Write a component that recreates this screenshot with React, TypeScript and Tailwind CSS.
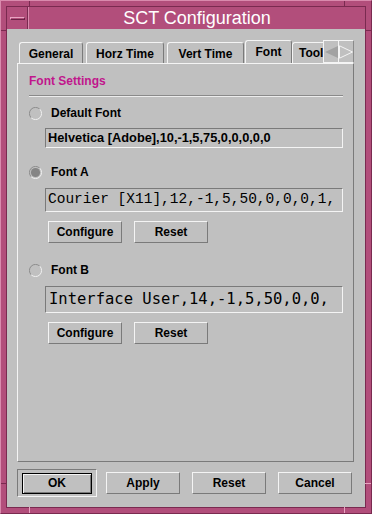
import React from 'react'

const sans = { fontFamily: '"Liberation Sans", Arial, sans-serif' }

// raised motif-ish button
function Btn({ label, className = '' }: { label: string; className?: string }) {
  return (
    <div
      className={`flex h-[22px] w-[74px] items-center justify-center border border-t-[#f4f4f4] border-l-[#f4f4f4] border-r-[#7a7a7a] border-b-[#7a7a7a] text-[12px] font-bold text-black ${className}`}
    >
      {label}
    </div>
  )
}

function Radio({ checked }: { checked?: boolean }) {
  return (
    <svg width="13" height="13" viewBox="0 0 13 13" className="shrink-0">
      <path d="M2.2 10.8 A6 6 0 0 1 10.8 2.2" fill="none" stroke="#8c8c8c" strokeWidth="1" />
      <path d="M10.8 2.2 A6 6 0 0 1 2.2 10.8" fill="none" stroke="#f0f0f0" strokeWidth="1" />
      {checked && <circle cx="6.5" cy="6.5" r="4.6" fill="#858585" />}
    </svg>
  )
}

function Field({ children, h, className = '' }: { children: React.ReactNode; h: string; className?: string }) {
  return (
    <div
      className={`ml-[16px] flex items-center overflow-hidden whitespace-nowrap border border-t-[#7a7a7a] border-l-[#7a7a7a] border-r-[#f4f4f4] border-b-[#f4f4f4] pl-[2px] ${h} ${className}`}
    >
      {children}
    </div>
  )
}

function Tab({ label, w, active }: { label: string; w: string; active?: boolean }) {
  return (
    <div
      className={`flex shrink-0 items-center justify-center rounded-t-[3px] border border-b-0 border-t-[#f4f4f4] border-l-[#f4f4f4] border-r-[#7a7a7a] bg-[#c0c0c0] text-[12px] font-bold text-black ${w} ${
        active ? 'relative z-10 -mb-px h-[24px] pb-[2px]' : 'h-[21px] pt-[1px]'
      }`}
    >
      {label}
    </div>
  )
}

export default function App() {
  return (
    <div
      className="relative h-[514px] w-[372px] border border-t-[#d98aad] border-l-[#d98aad] border-r-[#7a2a50] border-b-[#7a2a50] bg-[#b24e7b] p-[5px]"
      style={sans}
    >
      {/* frame corner ticks */}
      <div className="absolute left-[28px] top-0 h-[6px] w-px bg-[#7a2a50]" />
      <div className="absolute left-[343px] top-0 h-[6px] w-px bg-[#7a2a50]" />
      <div className="absolute bottom-0 left-[28px] h-[6px] w-px bg-[#e8a4c2]" />
      <div className="absolute bottom-0 left-[343px] h-[6px] w-px bg-[#e8a4c2]" />
      <div className="absolute left-0 top-[29px] h-px w-[6px] bg-[#7a2a50]" />
      <div className="absolute right-0 top-[29px] h-px w-[6px] bg-[#7a2a50]" />
      <div className="absolute bottom-[29px] left-0 h-px w-[6px] bg-[#7a2a50]" />
      <div className="absolute bottom-[29px] right-0 h-px w-[6px] bg-[#e8a4c2]" />

      <div className="flex h-full flex-col border border-[#7a2a50]">
        {/* title bar */}
        <div className="flex h-[22px] shrink-0">
          <div className="flex w-[21px] items-center justify-center border-r border-[#7a2a50]">
            <div className="h-[3px] w-[15px] border border-t-[#e8a4c2] border-l-[#e8a4c2] border-r-[#6a2245] border-b-[#6a2245]" />
          </div>
          <div className="flex flex-1 items-center justify-center border-l border-[#d98aad] text-[18px] leading-none text-white">
            SCT Configuration
          </div>
        </div>

        {/* client area */}
        <div className="flex flex-1 flex-col bg-[#c0c0c0] pb-[10px] pl-[10px] pr-[11px] pt-[11px]">
          {/* tab strip */}
          <div className="flex h-[23px] items-end">
            <div className="flex w-[306px] items-end overflow-hidden pl-[2px]">
              <Tab label="General" w="w-[64px]" />
              <div className="w-[3px] shrink-0" />
              <Tab label="Horz Time" w="w-[78px]" />
              <div className="w-[3px] shrink-0" />
              <Tab label="Vert Time" w="w-[77px]" />
              <div className="w-px shrink-0" />
              <Tab label="Font" w="w-[47px]" active />
              <div className="flex h-[21px] w-[44px] shrink-0 items-center rounded-t-[3px] border border-b-0 border-t-[#f4f4f4] border-l-[#f4f4f4] pl-[6px] text-[12px] font-bold text-black">
                Tool
              </div>
            </div>
            <div className="flex h-[23px] self-start">
              <div className="flex h-[23px] w-[16px] items-center justify-center border border-[#f4f4f4] bg-[#c0c0c0]">
                <svg width="14" height="14" viewBox="0 0 14 14">
                  <polygon points="1,7 14,1 14,13" fill="#a2a2a2" />
                </svg>
              </div>
              <div className="flex h-[23px] w-[15px] items-center justify-center border border-l-0 border-[#f4f4f4] border-r-[#8a8a8a]">
                <svg width="14" height="14" viewBox="0 0 14 14">
                  <polygon points="0.5,0.8 13.5,7 0.5,13.2" fill="none" stroke="#f4f4f4" strokeWidth="1" />
                </svg>
              </div>
            </div>
          </div>

          {/* tab panel */}
          <div className="flex h-[399px] flex-col border border-t-[#f4f4f4] border-l-[#f4f4f4] border-r-[#7a7a7a] border-b-[#7a7a7a] pl-[11px] pr-[10px] pt-[10px]">
            <div className="h-[14px] text-[12px] font-bold leading-[14px] text-[#c0168c]">Font Settings</div>
            <div className="mt-[7px] h-[2px] border-t border-b border-t-[#8a8a8a] border-b-[#ececec]" />

            <div className="mt-[8px] flex h-[16px] items-center">
              <Radio />
              <span className="ml-[9px] text-[12px] font-bold text-black">Default Font</span>
            </div>
            <Field h="mt-[7px] h-[20px]">
              <span className="text-[12.8px] font-bold text-black">Helvetica [Adobe],10,-1,5,75,0,0,0,0,0</span>
            </Field>

            <div className="mt-[16px] flex h-[16px] items-center">
              <Radio checked />
              <span className="ml-[9px] text-[12px] font-bold text-black">Font A</span>
            </div>
            <Field h="mt-[8px] h-[24px]">
              <span className="text-[14.5px] text-black" style={{ fontFamily: '"Liberation Mono", "Courier New", monospace' }}>
                Courier [X11],12,-1,5,50,0,0,0,1,
              </span>
            </Field>
            <div className="ml-[19px] mt-[9px] flex gap-[12px]">
              <Btn label="Configure" />
              <Btn label="Reset" />
            </div>

            <div className="mt-[19px] flex h-[16px] items-center">
              <Radio />
              <span className="ml-[9px] text-[12px] font-bold text-black">Font B</span>
            </div>
            <Field h="mt-[8px] h-[27px]">
              <span className="pl-px text-[15.5px] text-black" style={{ fontFamily: '"DejaVu Sans Mono", monospace' }}>
                Interface User,14,-1,5,50,0,0,
              </span>
            </Field>
            <div className="ml-[19px] mt-[9px] flex gap-[12px]">
              <Btn label="Configure" />
              <Btn label="Reset" />
            </div>
          </div>

          {/* dialog buttons */}
          <div className="mt-[7px] flex h-[28px] items-center">
            <div className="flex h-[28px] w-[80px] items-center justify-center border border-t-[#7a7a7a] border-l-[#7a7a7a] border-r-[#f4f4f4] border-b-[#f4f4f4]">
              <div className="flex h-[21px] w-[70px] items-center justify-center border border-black text-[12px] font-bold text-black shadow-[inset_1px_1px_0_#f4f4f4,inset_-1px_-1px_0_#7a7a7a]">
                OK
              </div>
            </div>
            <Btn label="Apply" className="ml-[9px]" />
            <Btn label="Reset" className="ml-[12px]" />
            <Btn label="Cancel" className="ml-[12px]" />
          </div>
        </div>
      </div>
    </div>
  )
}
